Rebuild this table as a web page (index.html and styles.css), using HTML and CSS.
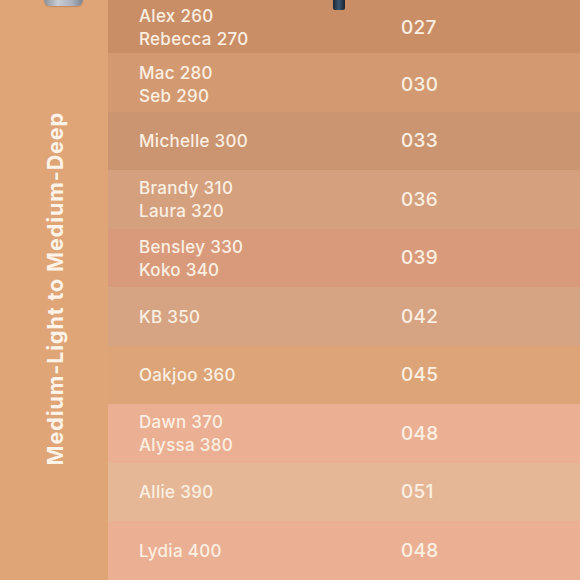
FILE: index.html
```html
<!DOCTYPE html>
<html>
<head>
<meta charset="utf-8">
<link rel="stylesheet" href="styles.css">
</head>
<body>
<div class="page">
  <aside class="side">
    <div class="side-label">Medium-Light to Medium-Deep</div>
    <div class="prod prod-silver"></div>
  </aside>
  <div class="table">
    <div class="prod prod-dark"></div>
    <div class="row r1"><div class="names">Alex 260<br>Rebecca 270</div><div class="num">027</div></div>
    <div class="row r2"><div class="names">Mac 280<br>Seb 290</div><div class="num">030</div></div>
    <div class="row r3"><div class="names">Michelle 300</div><div class="num">033</div></div>
    <div class="row r4"><div class="names">Brandy 310<br>Laura 320</div><div class="num">036</div></div>
    <div class="row r5"><div class="names">Bensley 330<br>Koko 340</div><div class="num">039</div></div>
    <div class="row r6"><div class="names">KB 350</div><div class="num">042</div></div>
    <div class="row r7"><div class="names">Oakjoo 360</div><div class="num">045</div></div>
    <div class="row r8"><div class="names">Dawn 370<br>Alyssa 380</div><div class="num">048</div></div>
    <div class="row r9"><div class="names">Allie 390</div><div class="num">051</div></div>
    <div class="row r10"><div class="names">Lydia 400</div><div class="num">048</div></div>
  </div>
</div>
</body>
</html>
```

FILE: styles.css
```css
* { box-sizing: border-box; }
html, body { margin: 0; padding: 0; }
body {
  width: 580px;
  height: 580px;
  overflow: hidden;
  background: #dfa577;
  font-family: Inter, "Noto Sans", sans-serif;
  color: #fbefe2;
}
.page {
  display: flex;
  width: 580px;
  height: 580px;
}
.side {
  position: relative;
  width: 108px;
  flex: none;
  background: #dfa577;
  display: flex;
  align-items: center;
  justify-content: center;
}
.side-label {
  writing-mode: vertical-rl;
  transform: rotate(180deg);
  font-size: 21.5px;
  font-weight: 700;
  letter-spacing: 0.9px;
  color: #fdf3e8;
  white-space: nowrap;
  margin-top: -3px;
  margin-left: 2px;
}
.table {
  position: relative;
  flex: 1;
  display: flex;
  flex-direction: column;
  margin-top: -5.5px;
}
.row {
  display: grid;
  grid-template-columns: 293px 1fr;
  align-items: center;
  height: 58.5px;
  flex: none;
  font-weight: 500;
}
.names {
  padding-left: 31px;
  font-size: 17px;
  line-height: 23px;
  letter-spacing: 0.3px;
  padding-top: 2px;
}
.num {
  font-size: 19px;
  letter-spacing: 0.3px;
}
.r1 { background: #c98e66; padding-top: 7px; }
.r2 { background: #d39a72; padding-top: 4px; }
.r3 { background: #cb9571; }
.r4 { background: #d4a07e; }
.r5 { background: #d89a7a; }
.r6 { background: #d6a383; }
.r7 { background: #dca477; }
.r8 { background: #ebb093; }
.r9 { background: #e5b797; }
.r10 { background: #ebb093; }

.prod {
  position: absolute;
  top: 0;
}
.prod-silver {
  left: 44px;
  width: 39px;
  height: 6px;
  border-radius: 0 0 6px 6px;
  background: linear-gradient(90deg, #8a909a 0%, #c8ccd3 35%, #aeb4bd 70%, #7d838c 100%);
  box-shadow: 0 1px 1px rgba(120, 80, 50, 0.3);
}
.prod-dark {
  left: 225px;
  top: 5.5px;
  width: 12px;
  height: 10px;
  border-radius: 0 0 2px 2px;
  background: linear-gradient(90deg, #1d2733 0%, #3a5670 50%, #1a2430 100%);
  z-index: 2;
}
```
